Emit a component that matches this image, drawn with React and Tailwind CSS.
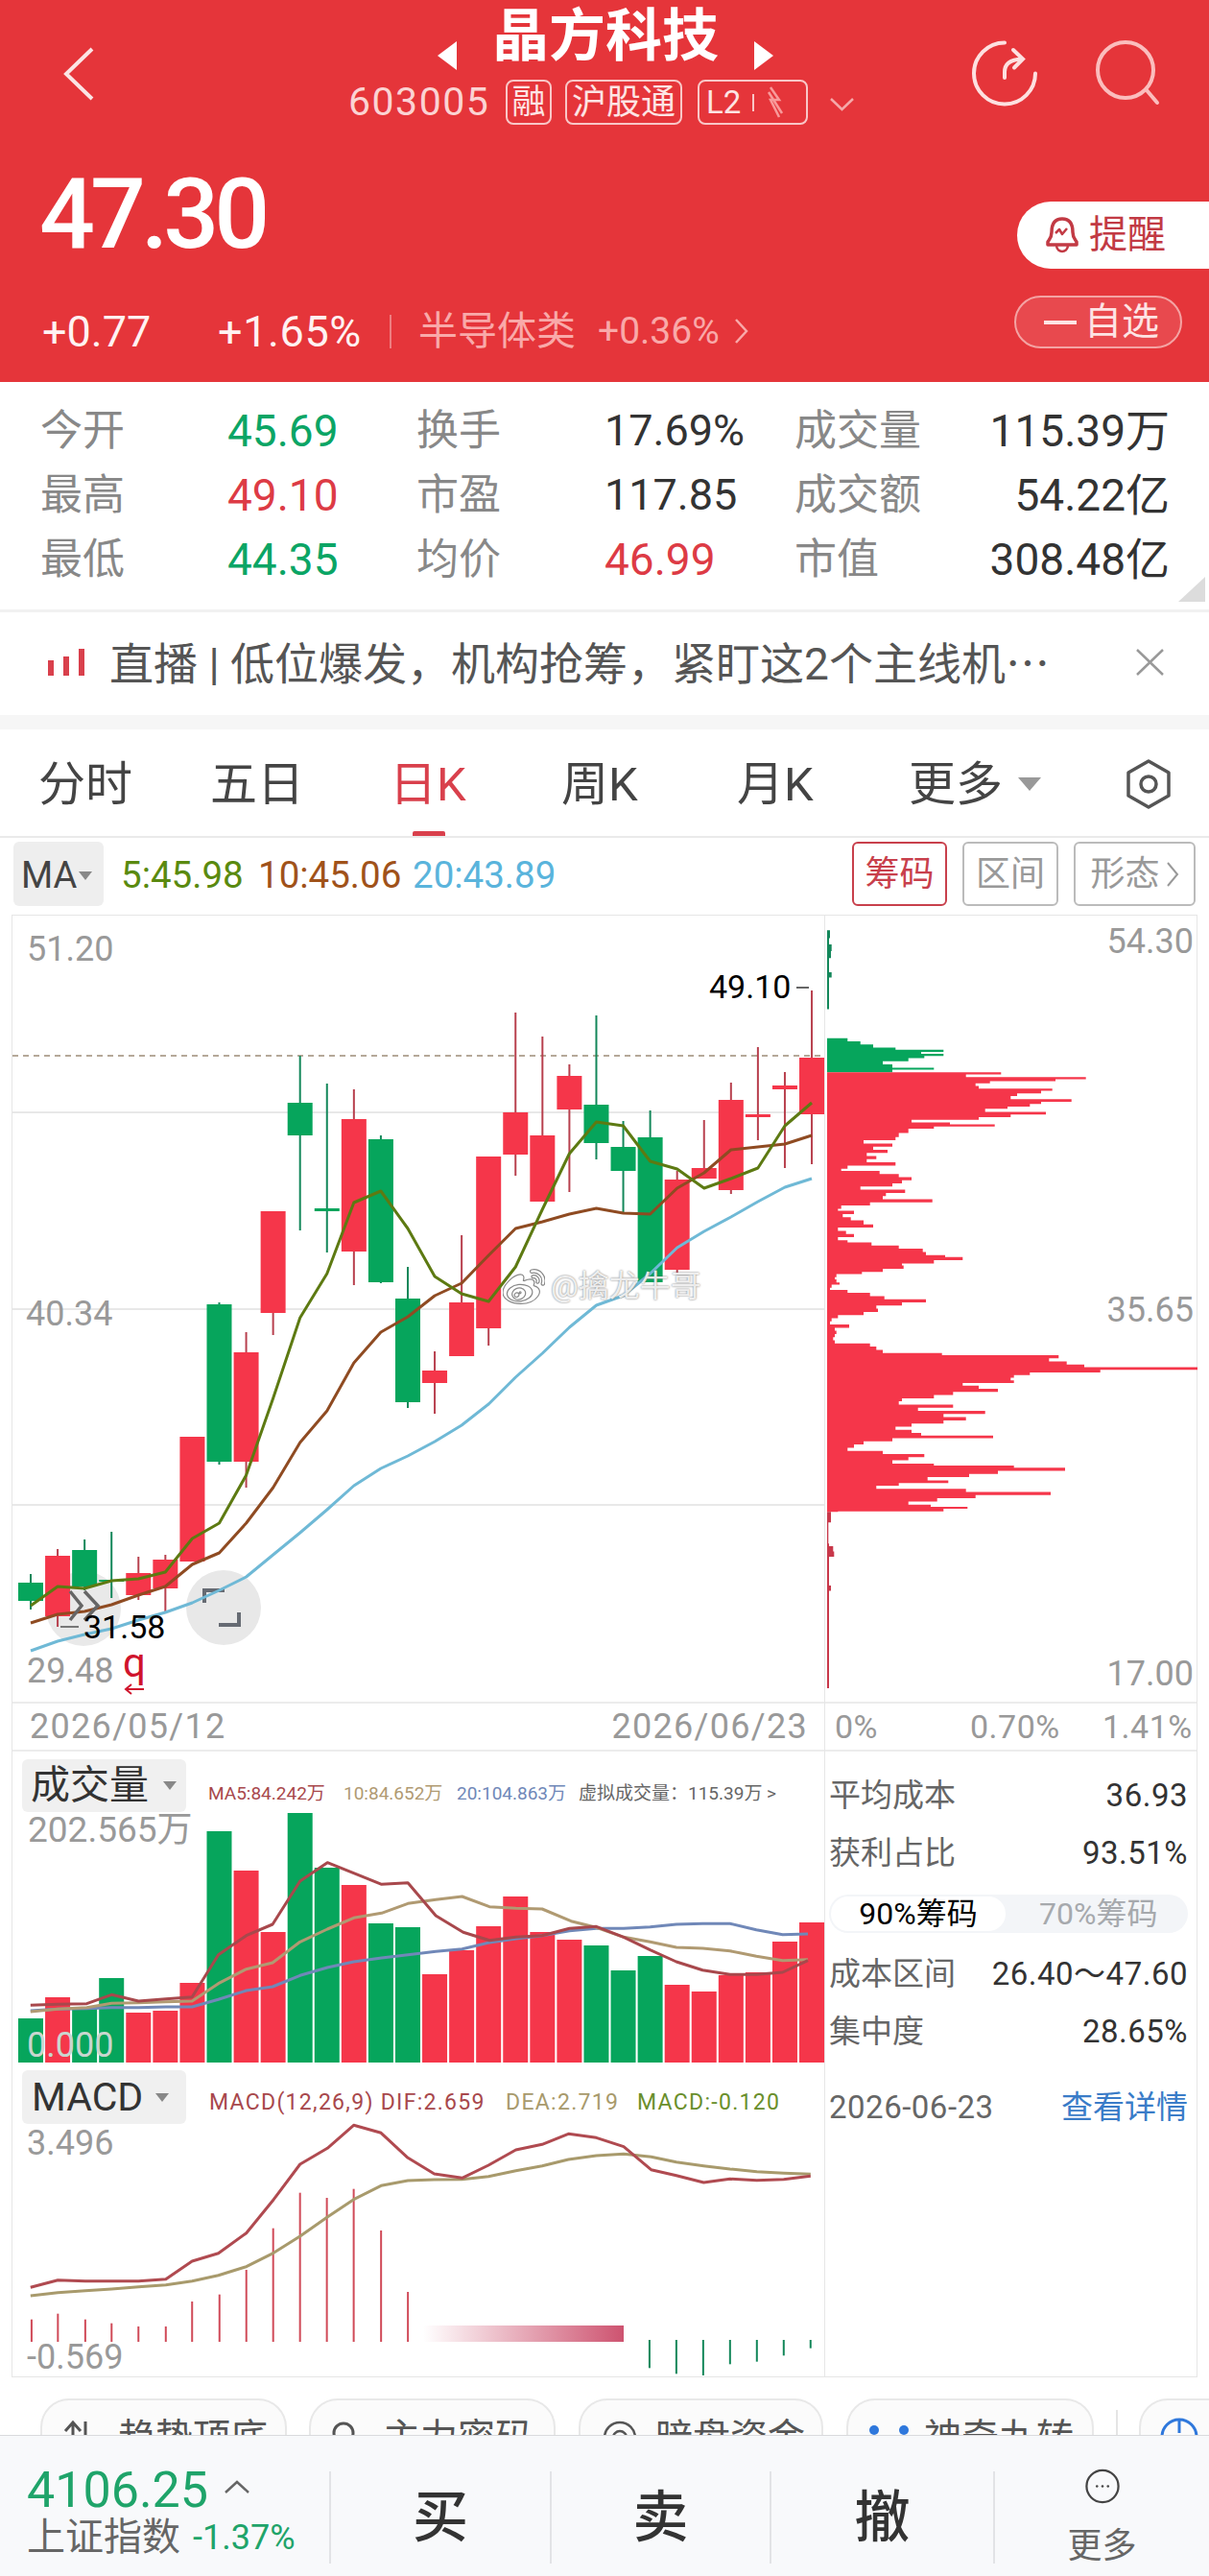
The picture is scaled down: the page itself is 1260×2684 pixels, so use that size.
import React from "react";
import { FaWeibo } from "react-icons/fa";

const RED = "#f5364a";
const GREEN = "#06a55c";
const cx = (i) => 32 + 28.07 * i;

// [colour, high, bodyTop, bodyBottom, low]
const candles = [
  ["g", 1640, 1649, 1668, 1677],
  ["r", 1614, 1621, 1684, 1695],
  ["g", 1604, 1615, 1653, 1657],
  ["g", 1596, 1646, 1648, 1665],
  ["r", 1622, 1639, 1662, 1667],
  ["r", 1620, 1625, 1655, 1680],
  ["r", 1497, 1497, 1627, 1627],
  ["g", 1357, 1359, 1523, 1526],
  ["r", 1388, 1409, 1523, 1550],
  ["r", 1262, 1262, 1368, 1391],
  ["g", 1100, 1149, 1183, 1282],
  ["g", 1129, 1259, 1262, 1305],
  ["r", 1135, 1166, 1304, 1339],
  ["g", 1183, 1187, 1336, 1337],
  ["g", 1320, 1353, 1461, 1467],
  ["r", 1408, 1428, 1441, 1473],
  ["r", 1287, 1357, 1413, 1413],
  ["r", 1205, 1205, 1384, 1402],
  ["r", 1055, 1159, 1203, 1225],
  ["r", 1080, 1183, 1252, 1252],
  ["r", 1109, 1121, 1156, 1242],
  ["g", 1058, 1151, 1191, 1208],
  ["g", 1168, 1195, 1220, 1263],
  ["g", 1157, 1185, 1336, 1336],
  ["r", 1220, 1229, 1323, 1328],
  ["r", 1167, 1217, 1228, 1228],
  ["r", 1128, 1146, 1240, 1244],
  ["r", 1091, 1161, 1164, 1188],
  ["r", 1117, 1131, 1135, 1217],
  ["r", 1032, 1102, 1161, 1213],
];
const ma5 = [1673,1653,1655,1647,1645,1638,1603,1587,1537,1457,1373,1327,1253,1241,1280,1330,1348,1356,1320,1260,1202,1169,1173,1210,1218,1238,1228,1217,1173,1149];
const ma10 = [1691,1682,1679,1672,1662,1653,1630,1618,1587,1550,1503,1470,1420,1388,1372,1350,1337,1308,1280,1273,1265,1259,1264,1265,1238,1222,1198,1195,1192,1183];
const ma20 = [1720,1710,1703,1697,1688,1680,1670,1657,1643,1620,1597,1573,1548,1530,1517,1502,1485,1463,1435,1410,1383,1360,1350,1327,1300,1283,1268,1252,1237,1228];
const line = (ys) => ys.map((y, i) => `${cx(i).toFixed(1)},${y}`).join(" ");

const volBars = [
  ["g",2103],["r",2081],["g",2092],["g",2061],["r",2097],["r",2095],["r",2066],["g",1908],["r",1949],["r",2013],
  ["g",1889],["g",1946],["r",1964],["g",2004],["g",2008],["r",2057],["r",2032],["r",2007],["r",1976],["r",2013],
  ["r",2021],["g",2027],["g",2053],["g",2038],["r",2068],["r",2075],["r",2058],["r",2055],["r",2023],["r",2003],
];
const vm5 = [[58,808],[110,805],[165,803],[212,775],[263,795],[315,788],[365,782],[415,650],[468,590],[518,555],[570,420],[622,362],[672,395],[725,430],[775,425],[828,528],[880,580],[930,605],[980,595],[1030,590],[1082,568],[1133,562],[1185,595],[1235,635],[1285,672],[1335,698],[1387,712],[1437,712],[1487,705],[1535,668]];
const vm10 = [[58,828],[110,820],[165,815],[212,802],[263,800],[315,797],[365,795],[415,740],[468,695],[518,675],[570,610],[622,570],[672,535],[725,520],[775,490],[828,478],[878,468],[930,500],[980,505],[1030,507],[1085,545],[1133,565],[1185,595],[1235,610],[1285,627],[1335,630],[1387,638],[1437,655],[1487,668],[1535,665]];
const vm20 = [[58,825],[110,820],[165,818],[212,815],[263,815],[315,813],[365,813],[415,790],[468,762],[518,750],[570,715],[622,690],[672,672],[725,660],[775,650],[828,640],[878,632],[930,612],[980,600],[1030,590],[1082,575],[1133,568],[1185,568],[1235,563],[1285,555],[1335,553],[1387,553],[1437,572],[1487,587],[1535,585]];
const dif = [[58,700],[110,677],[162,680],[212,680],[263,680],[315,674],[365,618],[415,593],[468,530],[520,425],[570,315],[622,265],[672,193],[724,217],[775,295],[825,345],[878,358],[928,318],[980,270],[1030,253],[1080,220],[1133,232],[1185,260],[1237,332],[1285,350],[1337,372],[1387,361],[1438,365],[1489,362],[1540,352]];
const dea = [[58,726],[110,716],[162,710],[212,705],[263,698],[315,692],[365,680],[415,662],[468,635],[520,592],[570,540],[622,480],[672,425],[724,382],[775,366],[825,363],[878,362],[928,353],[980,335],[1030,320],[1080,300],[1133,288],[1185,283],[1237,292],[1285,308],[1337,320],[1387,330],[1438,338],[1489,343],[1540,346]];
const histRed = [[60,800],[110,782],[162,800],[212,812],[263,822],[315,822],[365,744],[417,722],[468,645],[519,515],[570,404],[621,420],[672,392],[724,522],[775,714]];
const histGreen = [[1234,952],[1285,970],[1336,975],[1387,940],[1438,932],[1489,913],[1540,890]];
const zoomLine = (pts, top) => pts.map(([x, y]) => `${(x / 1.823).toFixed(1)},${(top + y / 3).toFixed(1)}`).join(" ");

const chipRed = [[305,610],[309,500],[314,875],[318,780],[322,575],[326,530],[331,540],[336,770],[340,735],[345,660],[350,640],[356,830],[361,735],[365,700],[370,630],[374,560],[380,750],[385,640],[390,540],[395,330],[400,450],[404,590],[408,400],[412,320],[420,290],[428,280],[434,180],[440,270],[446,210],[452,255],[458,190],[464,220],[470,190],[476,280],[482,130],[488,110],[492,230],[498,290],[504,330],[510,300],[516,270],[522,170],[528,310],[534,250],[540,240],[546,395],[552,200],[558,110],[564,100],[568,150],[574,115],[580,140],[586,180],[594,210],[600,100],[606,125],[612,150],[618,100],[624,130],[628,205],[634,290],[640,365],[646,375],[652,435],[656,490],[662,400],[668,300],[672,305],[678,240],[684,175],[688,95],[694,90],[698,95],[704,105],[708,80],[714,75],[718,130],[724,200],[730,245],[736,375],[742,300],[748,220],[754,225],[760,180],[766,100],[772,80],[778,75],[784,135],[790,90],[796,95],[802,90],[808,85],[814,90],[820,200],[826,220],[832,240],[838,425],[842,790],[848,760],[854,815],[860,870],[865,1224],[870,920],[875,700],[880,650],[885,640],[890,650],[895,490],[900,540],[906,600],[912,460],[918,400],[924,300],[930,290],[936,460],[942,350],[948,560],[954,430],[960,500],[966,430],[972,330],[978,280],[984,330],[990,360],[995,585],[1000,270],[1006,180],[1012,150],[1018,130],[1024,240],[1030,370],[1036,320],[1042,270],[1048,400],[1052,650],[1056,810],[1062,600],[1068,510],[1074,380],[1080,445],[1085,290],[1090,220],[1096,500],[1102,765],[1108,530],[1114,410],[1120,320],[1126,390],[1130,505],[1134,430],[1139,100]];
const chipTail = [[1140,78],[1155,78],[1160,70],[1170,70],[1200,72],[1205,85],[1215,88],[1225,72],[1270,72],[1280,78],[1290,72],[1475,72]];
const chipGreen = [[240,130],[246,170],[252,210],[258,280],[262,430],[266,360],[270,430],[274,370],[278,320],[284,240],[290,270],[296,400],[300,270],[305,230]];
const chipTop = [[35,75],[50,72],[62,80],[75,78],[88,72],[115,80],[125,72],[150,72],[165,72]];
const chipPath = (rows, end) => {
  const Y = (p) => (950 + p / 1.823).toFixed(1);
  const X = (p) => (840 + p / 3).toFixed(1);
  let d = `M862 ${Y(rows[0][0])}`;
  rows.forEach(([py, px], i) => {
    const next = i + 1 < rows.length ? rows[i + 1][0] : end;
    d += ` L${X(px)} ${Y(py)} L${X(px)} ${Y(next)}`;
  });
  return d + ` L862 ${Y(end)} Z`;
};

function AxisText({ x, y, anchor = "start", size = 36, fill = "#999", children, spacing = 0 }) {
  return (
    <text x={x} y={y + size * 0.355} textAnchor={anchor} fontSize={size} fill={fill} letterSpacing={spacing}>
      {children}
    </text>
  );
}

function MainChart() {
  return (
    <div className="relative h-[819px]">
      <svg className="block overflow-visible" width="846" height="819" viewBox="13 954 846 819">
        {[1159, 1364, 1568].map((y) => (
          <line key={y} x1="13" x2="859" y1={y} y2={y} stroke="#e8e8e8" strokeWidth="2" />
        ))}
        <line x1="13" x2="859" y1="1100" y2="1100" stroke="#b5a899" strokeWidth="2" strokeDasharray="6 5" />
        <circle cx="87" cy="1676" r="39" fill="#e9e9e9" />
        {candles.map(([c, h, t, b, l], i) => {
          const col = c === "r" ? RED : GREEN;
          const wick = c === "r" ? "#b8404e" : "#13875a";
          return (
            <g key={i}>
              <line x1={cx(i)} x2={cx(i)} y1={h} y2={l} stroke={wick} strokeWidth="2" />
              <rect x={cx(i) - 13} y={t} width="26" height={b - t} fill={col} />
            </g>
          );
        })}
        <circle cx="233" cy="1675" r="39" fill="#e8e8e8" />
        <path d="M216 1670v-13h21M252 1680v13h-21" transform="translate(-3 0)" fill="none" stroke="#666b73" strokeWidth="4" />
        <polyline points={line(ma20)} fill="none" stroke="#6fb9d6" strokeWidth="3" strokeLinejoin="round" />
        <polyline points={line(ma10)} fill="none" stroke="#8f4b22" strokeWidth="3" strokeLinejoin="round" />
        <polyline points={line(ma5)} fill="none" stroke="#5d7a12" strokeWidth="3" strokeLinejoin="round" />
        <path d="M73 1658l12 15-12 15M88 1658l14 15-14 15" fill="none" stroke="#666" strokeWidth="3.5" />
        <AxisText x={28} y={988}>51.20</AxisText>
        <AxisText x={27} y={1368}>40.34</AxisText>
        <AxisText x={28} y={1740}>29.48</AxisText>
        <AxisText x={739} y={1028} size={34} fill="#000">49.10</AxisText>
        <line x1="830" x2="843" y1="1029" y2="1029" stroke="#666" strokeWidth="2" />
        <line x1="63" x2="82" y1="1695" y2="1695" stroke="#777" strokeWidth="2" />
        <AxisText x={87} y={1695} size={34} fill="#000">31.58</AxisText>
        <AxisText x={128} y={1732} size={42} fill="#d0142c">q</AxisText>
        <path d="M150 1760h-19m6-5l-6 5 6 5" fill="none" stroke="#d0142c" strokeWidth="2" />
      </svg>
      <FaWeibo className="absolute left-[511px] top-[366px] text-[44px] text-white" stroke="#888" strokeWidth={14} />
      <span className="absolute left-[561px] top-[367px] text-[32px] leading-[38px] text-white/85 [text-shadow:0_0_2px_#666]">@擒龙牛哥</span>
    </div>
  );
}

function VolumePanel() {
  return (
    <div className="relative h-[325px]">
      <svg className="block overflow-visible" width="846" height="325" viewBox="13 1825 846 325">
        {volBars.map(([c, t], i) => (
          <rect key={i} x={cx(i) - 13} y={t} width="26" height={2149 - t} fill={c === "r" ? RED : GREEN} />
        ))}
        <polyline points={zoomLine(vm20, 1820)} fill="none" stroke="#7088b8" strokeWidth="3" strokeLinejoin="round" />
        <polyline points={zoomLine(vm10, 1820)} fill="none" stroke="#b09a72" strokeWidth="3" strokeLinejoin="round" />
        <polyline points={zoomLine(vm5, 1820)} fill="none" stroke="#a8484c" strokeWidth="3" strokeLinejoin="round" />
        <AxisText x={29} y={1906} size={37}>202.565万</AxisText>
        <AxisText x={28} y={2130} size={36} fill="#c9d6cf">0.000</AxisText>
      </svg>
      <div className="absolute left-[10px] top-[8px] flex h-[55px] w-[171px] items-center gap-[15px] rounded-[6px] bg-[#f0f0f0] pl-[9px]">
        <span className="text-[41px] leading-none text-[#333]">成交量</span>
        <span className="h-0 w-0 border-x-[7px] border-t-[9px] border-x-transparent border-t-[#888]" />
      </div>
      <div className="absolute left-[204px] top-[32px] flex h-[22px] items-center whitespace-nowrap text-[19px] leading-none">
        <span className="w-[141px] text-[#a8484c]">MA5:84.242万</span>
        <span className="w-[118px] text-[#b09a72]">10:84.652万</span>
        <span className="w-[127px] text-[#7088b8]">20:104.863万</span>
        <span className="text-[#666]">虚拟成交量：115.39万 &gt;</span>
      </div>
    </div>
  );
}

function MacdPanel() {
  return (
    <div className="relative h-[327px] border-b border-[#e6e6e6]">
      <svg className="block overflow-visible" width="846" height="326" viewBox="13 2150 846 326">
        {histRed.map(([x, y], i) => (
          <line key={i} x1={x / 1.823} x2={x / 1.823} y1={2150 + y / 3} y2="2440" stroke="#d04a58" strokeWidth="2" />
        ))}
        {histGreen.map(([x, y], i) => (
          <line key={i} x1={x / 1.823} x2={x / 1.823} y1="2438" y2={2150 + y / 3} stroke="#13875a" strokeWidth="2" />
        ))}
        <defs>
          <linearGradient id="macdFade" x1="0" x2="1" y1="0" y2="0">
            <stop offset="0" stopColor="#c84060" stopOpacity="0" />
            <stop offset="1" stopColor="#c84060" stopOpacity="0.9" />
          </linearGradient>
        </defs>
        <rect x="441" y="2423" width="209" height="17" fill="url(#macdFade)" />
        <polyline points={zoomLine(dea, 2150)} fill="none" stroke="#a89a6c" strokeWidth="3" strokeLinejoin="round" />
        <polyline points={zoomLine(dif, 2150)} fill="none" stroke="#b04a50" strokeWidth="3" strokeLinejoin="round" />
        <AxisText x={28} y={2232}>3.496</AxisText>
        <AxisText x={28} y={2455}>-0.569</AxisText>
      </svg>
      <div className="absolute left-[10px] top-[7px] flex h-[56px] w-[171px] items-center gap-[13px] rounded-[6px] bg-[#f0f0f0] pl-[10px]">
        <span className="text-[41px] leading-none text-[#333]">MACD</span>
        <span className="h-0 w-0 border-x-[7px] border-t-[9px] border-x-transparent border-t-[#888]" />
      </div>
      <div className="absolute left-[205px] top-[29px] flex h-[22px] items-center whitespace-nowrap text-[23px] leading-none tracking-[1.3px]">
        <span className="w-[309px] text-[#a8484c]">MACD(12,26,9) DIF:2.659</span>
        <span className="w-[137px] text-[#a89a6c]">DEA:2.719</span>
        <span className="text-[#6a8f2c]">MACD:-0.120</span>
      </div>
    </div>
  );
}

function ChipChart() {
  return (
    <svg className="block overflow-visible" width="387" height="819" viewBox="860 954 387 819">
      <path d={chipPath(chipTop, 185)} fill="#13875a" />
      <path d={chipPath(chipGreen, 305)} fill={GREEN} />
      <path d={chipPath(chipRed, 1140)} fill={RED} />
      <path d={chipPath(chipTail, 1475)} fill="#c8384a" />
      <AxisText x={1244} y={980} anchor="end">54.30</AxisText>
      <AxisText x={1244} y={1364} anchor="end">35.65</AxisText>
      <AxisText x={1244} y={1743} anchor="end">17.00</AxisText>
    </svg>
  );
}

function StatRow({ label, value, color = "text-[#333]" }) {
  return (
    <div className="flex h-[60px] items-center justify-between">
      <span className="text-[33px] leading-none text-[#666]">{label}</span>
      <span className={`text-[33px] leading-none tracking-[0.5px] ${color}`}>{value}</span>
    </div>
  );
}

function Tab({ children, active }) {
  return (
    <span className={`text-[49px] leading-none ${active ? "text-[#d9404c]" : "text-[#444]"}`}>{children}</span>
  );
}

const statCols = "grid h-[67px] grid-cols-[195px_197px_196px_198px_198px_193px] items-center text-[44px] leading-none whitespace-nowrap";
const statNum = "text-[46px]";

export default function App() {
  return (
    <div className="relative h-[2684px] w-[1260px] overflow-hidden bg-white font-[Roboto,'Noto_Sans_CJK_SC',sans-serif]">
      {/* header */}
      <header className="h-[398px] bg-[#e5353a]">
        <div className="flex h-[140px]">
          <div className="w-[363px] pl-[64px] pt-[48px]">
            <svg width="36" height="58" viewBox="0 0 36 58" fill="none" stroke="#fbe4e4" strokeWidth="4">
              <path d="M32 3L5 29l27 26" />
            </svg>
          </div>
          <div className="flex w-[528px] flex-col">
            <div className="ml-[93px] flex h-[72px] items-center">
              <span className="mt-[44px] h-0 w-0 border-y-[15px] border-r-[20px] border-y-transparent border-r-white" />
              <span className="ml-[37px] mt-[3px] text-[59px] font-bold leading-none text-white">晶方科技</span>
              <span className="ml-[37px] mt-[44px] h-0 w-0 border-y-[15px] border-l-[20px] border-y-transparent border-l-white" />
            </div>
            <div className="mt-[11px] flex h-[47px] items-center">
              <span className="w-[164px] text-[41px] leading-none tracking-[1.5px] text-[#fbd3d3]">603005</span>
              <span className="flex h-[47px] w-[48px] items-center justify-center rounded-[8px] border-2 border-[#f9c7c7] text-[35px] leading-none text-[#fde4e4]">融</span>
              <span className="ml-[14px] flex h-[47px] w-[122px] items-center justify-center rounded-[8px] border-2 border-[#f9c7c7] text-[36px] leading-none text-[#fde4e4]">沪股通</span>
              <span className="ml-[16px] flex h-[47px] w-[115px] items-center gap-[12px] rounded-[8px] border-2 border-[#f9c7c7] pl-[7px] text-[33px] leading-none text-[#fde4e4]">
                L2
                <span className="h-[18px] w-[2px] bg-[#f9c7c7]" />
                <svg width="20" height="36" viewBox="0 0 20 36" fill="none" stroke="#f89a9a" strokeWidth="2.5">
                  <path d="M5 2l9 13H5l9 18M3 7l14 22" />
                </svg>
              </span>
              <svg className="ml-[22px] mt-[4px]" width="27" height="15" viewBox="0 0 27 15" fill="none" stroke="#f5a9a9" strokeWidth="2.5">
                <path d="M2 2l11.500 11L25 2" />
              </svg>
            </div>
          </div>
          <div className="flex pl-[122px] pt-[40px]">
            <svg width="72" height="72" viewBox="0 0 72 72" fill="none" stroke="#fde0e0" strokeWidth="4" strokeLinecap="round">
              <path d="M34 4.500A32 32 0 1 0 66 36.500" />
              <path d="M34 41V35C34 26 40 22 52 21.500M43 12l10 9.500-9 9" />
            </svg>
            <svg className="ml-[55px]" width="72" height="72" viewBox="0 0 72 72" fill="none" stroke="#fbbdbd" strokeWidth="4" strokeLinecap="round">
              <circle cx="33" cy="33" r="29" />
              <path d="M55 54l11 13" />
            </svg>
          </div>
        </div>
        <div className="flex h-[258px]">
          <div className="w-[1057px] pl-[44px]">
            <div className="ml-[-3px] mt-[35px] h-[96px] text-[102px] font-medium leading-[96px] tracking-[-5px] text-white">47.30</div>
            <div className="mt-[56px] flex h-[36px] items-center whitespace-nowrap">
              <span className="w-[183px] text-[45px] leading-none text-[#fff2f2]">+0.77</span>
              <span className="w-[179px] text-[45px] leading-none tracking-[0.6px] text-[#fff2f2]">+1.65%</span>
              <span className="h-[35px] w-[2px] bg-[#ee7d80]" />
              <span className="ml-[28px] w-[187px] text-[41px] leading-none text-[#f9a9a9]">半导体类</span>
              <span className="w-[142px] text-[39px] leading-none text-[#f9a9a9]">+0.36%</span>
              <svg width="16" height="28" viewBox="0 0 16 28" fill="none" stroke="#f9a9a9" strokeWidth="2.5">
                <path d="M2 2l11 12L2 26" />
              </svg>
            </div>
          </div>
          <div className="flex flex-1 flex-col items-start">
            <div className="ml-[3px] mt-[70px] flex h-[70px] w-[200px] items-center gap-[10px] rounded-l-[35px] bg-white pl-[29px]">
              <svg width="36" height="38" viewBox="0 0 36 38" fill="none" stroke="#c23a44" strokeWidth="3.500" strokeLinejoin="round">
                <path d="M18 2C9 2 7 9 7 16c0 6-3 8-4 10v3h30v-3c-1-2-4-4-4-10 0-7-2-14-11-14z" />
                <path d="M12 30c1 8 11 8 12 0M11 17l4-4 3 5 5-6" strokeWidth="2.500" />
              </svg>
              <span className="text-[40px] leading-none text-[#c23a44]">提醒</span>
            </div>
            <div className="mt-[28px] flex h-[55px] w-[175px] items-center rounded-[28px] border-2 border-[#f4a3a3] bg-white/10 pl-[29px]">
              <span className="h-[4px] w-[34px] bg-[#fde4e4]" />
              <span className="ml-[8px] text-[39px] leading-none text-[#fde4e4]">自选</span>
            </div>
          </div>
        </div>
      </header>

      {/* stats */}
      <section className="relative h-[237px] pl-[42px] pt-[17px]">
        <div className={statCols}>
          <span className="text-[#888]">今开</span><span className={`${statNum} text-[#0ba565]`}>45.69</span>
          <span className="text-[#888]">换手</span><span className="text-[45px] text-[#333]">17.69%</span>
          <span className="text-[#888]">成交量</span><span className={`${statNum} text-right text-[#333]`}>115.39万</span>
        </div>
        <div className={statCols}>
          <span className="text-[#888]">最高</span><span className={`${statNum} text-[#dd3b45]`}>49.10</span>
          <span className="text-[#888]">市盈</span><span className="text-[45px] text-[#333]">117.85</span>
          <span className="text-[#888]">成交额</span><span className={`${statNum} text-right text-[#333]`}>54.22亿</span>
        </div>
        <div className={statCols}>
          <span className="text-[#888]">最低</span><span className={`${statNum} text-[#0ba565]`}>44.35</span>
          <span className="text-[#888]">均价</span><span className={`${statNum} text-[#dd3b45]`}>46.99</span>
          <span className="text-[#888]">市值</span><span className={`${statNum} text-right text-[#333]`}>308.48亿</span>
        </div>
        <span className="absolute bottom-[8px] right-[4px] h-[26px] w-[28px] bg-[#dcdcdc] [clip-path:polygon(100%_0,100%_100%,0_100%)]" />
      </section>

      {/* banner */}
      <section className="flex h-[110px] items-center border-t-[3px] border-[#f1f1f1] pb-[4px] pl-[50px]">
        <span className="flex h-[28px] w-[38px] items-end justify-between">
          <i className="h-[16px] w-[6px] bg-[#d9404c]" />
          <i className="h-[20px] w-[6px] bg-[#d9404c]" />
          <i className="h-[28px] w-[6px] bg-[#d9404c]" />
        </span>
        <span className="ml-[26px] w-[1000px] whitespace-nowrap text-[46px] leading-none text-[#555]">
          直播 | 低位爆发，机构抢筹，紧盯这2个主线机<span className="font-['Noto_Sans_CJK_SC']">…</span>
        </span>
        <svg className="ml-[69px]" width="31" height="28" viewBox="0 0 31 28" fill="none" stroke="#999" strokeWidth="2.500">
          <path d="M2 1l27 26M29 1L2 27" />
        </svg>
      </section>
      <div className="h-[15px] bg-[#f6f6f6]" />

      {/* tabs */}
      <section className="relative grid h-[113px] grid-cols-[179px_187px_179px_183px_179px_227px_46px] items-center border-b-2 border-[#eaeaea] pl-[40px] pt-[3px]">
        <Tab>分时</Tab>
        <Tab>五日</Tab>
        <Tab active>日K</Tab>
        <Tab>周K</Tab>
        <Tab>月K</Tab>
        <span className="flex items-center gap-[16px]">
          <Tab>更多</Tab>
          <span className="h-0 w-0 border-x-[12px] border-t-[14px] border-x-transparent border-t-[#999]" />
        </span>
        <svg width="46" height="52" viewBox="0 0 46 52" fill="none" stroke="#555" strokeWidth="3.500" strokeLinejoin="round">
          <path d="M23 2l21 12v24L23 50 2 38V14z" />
          <circle cx="23" cy="26" r="8" />
        </svg>
        <span className="absolute bottom-[0px] left-[430px] h-[5px] w-[34px] rounded-t-[2px] bg-[#d9404c]" />
      </section>

      {/* indicator row */}
      <section className="flex h-[80px] items-start pl-[14px] pt-[4px]">
        <div className="flex h-[67px] w-[94px] items-center rounded-[6px] bg-[#eee] pl-[8px] pt-[3px]">
          <span className="text-[38px] leading-none text-[#444]">MA</span>
          <span className="ml-[2px] h-0 w-0 border-x-[7px] border-t-[9px] border-x-transparent border-t-[#888]" />
        </div>
        <div className="ml-[18px] flex h-[67px] w-[762px] items-center whitespace-nowrap pt-[3px] text-[38.5px] leading-none">
          <span className="w-[143px] text-[#5a8a10]">5:45.98</span>
          <span className="w-[161px] text-[#a0521a]">10:45.06</span>
          <span className="text-[#5ab4dc]">20:43.89</span>
        </div>
        <span className="flex h-[67px] w-[99px] items-center justify-center rounded-[6px] border-2 border-[#c8404c] text-[36px] leading-none text-[#c8404c]">筹码</span>
        <span className="ml-[16px] flex h-[67px] w-[100px] items-center justify-center rounded-[6px] border-2 border-[#bbb] text-[36px] leading-none text-[#999]">区间</span>
        <span className="ml-[16px] flex h-[67px] w-[127px] items-center justify-center gap-[6px] rounded-[6px] border-2 border-[#bbb] text-[36px] leading-none text-[#999]">
          形态
          <svg width="14" height="28" viewBox="0 0 14 28" fill="none" stroke="#999" strokeWidth="2">
            <path d="M2 2l10 12L2 26" />
          </svg>
        </span>
      </section>

      {/* charts */}
      <section className="ml-[12px] flex h-[1524px] w-[1236px]">
        <div className="w-[848px] border-x border-t border-[#e6e6e6]">
          <MainChart />
          <div className="flex h-[52px] items-center justify-between border-y-2 border-[#ececec] pl-[18px] pr-[17px] text-[36px] leading-none tracking-[1.3px] text-[#999]">
            <span>2026/05/12</span>
            <span>2026/06/23</span>
          </div>
          <VolumePanel />
          <MacdPanel />
        </div>
        <div className="w-[388px] border-y border-r border-[#e6e6e6]">
          <ChipChart />
          <div className="grid h-[52px] grid-cols-[141px_138px_auto] items-center border-y-2 border-[#ececec] pl-[10px] text-[34px] leading-none tracking-[0.5px] text-[#999]">
            <span>0%</span>
            <span>0.70%</span>
            <span>1.41%</span>
          </div>
          <div className="pl-[4px] pr-[9px] pt-[15px]">
            <StatRow label="平均成本" value="36.93" />
            <StatRow label="获利占比" value="93.51%" />
            <div className="mt-[14px] flex h-[40px] w-[374px] items-center rounded-[20px] bg-[#f3f5f8] p-[2px] text-[32px] leading-none">
              <span className="flex h-[36px] w-[182px] items-center justify-center rounded-[18px] bg-white text-black">90%筹码</span>
              <span className="ml-[35px] text-[#a6a9ad]">70%筹码</span>
            </div>
            <div className="mt-[12px]">
              <StatRow label="成本区间" value="26.40～47.60" />
              <StatRow label="集中度" value="28.65%" />
            </div>
            <div className="mt-[19px] flex h-[60px] items-center justify-between">
              <span className="text-[33px] leading-none tracking-[0.5px] text-[#666]">2026-06-23</span>
              <span className="text-[33px] leading-none text-[#3a7cc8]">查看详情</span>
            </div>
          </div>
        </div>
      </section>

      {/* quick links, cut by the footer */}
      <section className="mt-[22px] flex h-[38px] items-start overflow-hidden">
        <div className="ml-[42px] flex h-[70px] w-[257px] shrink-0 items-start rounded-[30px] border-2 border-[#e8e8e8] bg-[#fbfbfb] pl-[22px] pt-[20px]">
          <svg width="26" height="28" viewBox="0 0 26 28" fill="none" stroke="#555" strokeWidth="3"><path d="M2 12l8-9 8 9M10 4v22M23 2v24" /></svg>
          <span className="ml-[31px] text-[39px] leading-none text-[#555]">趋势顶底</span>
        </div>
        <div className="ml-[23px] flex h-[70px] w-[257px] shrink-0 items-start rounded-[30px] border-2 border-[#e8e8e8] bg-[#fbfbfb] pl-[22px] pt-[20px]">
          <svg width="24" height="28" viewBox="0 0 24 28" fill="none" stroke="#555" strokeWidth="3"><circle cx="12" cy="14" r="10" /></svg>
          <span className="ml-[29px] text-[39px] leading-none text-[#555]">主力密码</span>
        </div>
        <div className="ml-[24px] flex h-[70px] w-[255px] shrink-0 items-start rounded-[30px] border-2 border-[#e8e8e8] bg-[#fbfbfb] pl-[22px] pt-[20px]">
          <svg width="38" height="38" viewBox="0 0 38 38" fill="none" stroke="#555" strokeWidth="2.500"><circle cx="19" cy="19" r="16" /><circle cx="19" cy="19" r="7" /></svg>
          <span className="ml-[18px] text-[39px] leading-none text-[#555]">暗盘资金</span>
        </div>
        <div className="ml-[24px] flex h-[70px] w-[258px] shrink-0 items-start rounded-[30px] border-2 border-[#e8e8e8] bg-[#fbfbfb] pl-[22px] pt-[20px]">
          <span className="mt-[6px] h-[10px] w-[10px] rounded-full bg-[#2f78dc]" />
          <span className="ml-[21px] mt-[6px] h-[10px] w-[10px] rounded-full bg-[#2f78dc]" />
          <span className="ml-[16px] text-[39px] leading-none text-[#555]">神奇九转</span>
        </div>
        <span className="ml-[23px] mt-[12px] h-[30px] w-[2px] shrink-0 bg-[#e5e5e5]" />
        <div className="ml-[22px] flex h-[70px] w-[120px] shrink-0 items-start rounded-[30px] border-2 border-[#e8e8e8] bg-[#fbfbfb] pl-[20px] pt-[18px]">
          <svg width="40" height="40" viewBox="0 0 40 40" fill="none" stroke="#2f78dc" strokeWidth="3"><circle cx="20" cy="20" r="18" /><path d="M20 2v14" /></svg>
        </div>
      </section>

      {/* footer */}
      <footer className="flex h-[147px] items-start border-t border-[#d9dadd] bg-[#f8f9fb]">
        <div className="w-[343px] pl-[28px] pt-[35px]">
          <div className="flex items-center">
            <span className="text-[52px] leading-[44px] text-[#1fa46a]">4106.25</span>
            <svg className="ml-[16px] mt-[-8px]" width="28" height="14" viewBox="0 0 28 14" fill="none" stroke="#666" strokeWidth="2.500"><path d="M2 13L14 2l12 11" /></svg>
          </div>
          <div className="mt-[7px] flex items-center whitespace-nowrap">
            <span className="text-[40px] leading-none text-[#666]">上证指数</span>
            <span className="ml-[13px] text-[36px] leading-none text-[#1fa46a]">-1.37%</span>
          </div>
        </div>
        <div className="mt-[37px] flex h-[96px] w-[230px] items-center justify-center border-l-2 border-[#e2e3e6] text-[58px] font-medium leading-none text-[#333]">买</div>
        <div className="mt-[37px] flex h-[96px] w-[229px] items-center justify-center border-l-2 border-[#e2e3e6] text-[58px] font-medium leading-none text-[#333]">卖</div>
        <div className="mt-[37px] flex h-[96px] w-[233px] items-center justify-center border-l-2 border-[#e2e3e6] text-[58px] font-medium leading-none text-[#333]">撤</div>
        <div className="mt-[37px] flex h-[96px] w-[225px] flex-col items-center border-l-2 border-[#e2e3e6]">
          <svg className="mt-[-3px]" width="58" height="58" viewBox="0 0 58 58" fill="none" stroke="#444" strokeWidth="3.500">
            <circle cx="29" cy="29" r="26" />
            <circle cx="20" cy="29" r="2" fill="#444" stroke="none" />
            <circle cx="29" cy="29" r="2" fill="#444" stroke="none" />
            <circle cx="38" cy="29" r="2" fill="#444" stroke="none" />
          </svg>
          <span className="mt-[26px] text-[36px] leading-none text-[#666]">更多</span>
        </div>
      </footer>
    </div>
  );
}
